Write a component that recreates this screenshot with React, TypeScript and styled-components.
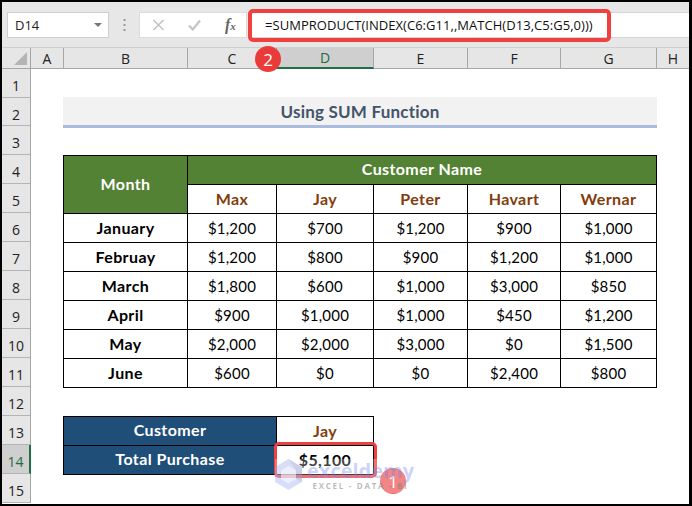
import React from "react";
import styled, { createGlobalStyle } from "styled-components";

const Global = createGlobalStyle`
  html, body { margin: 0; padding: 0; background: #000; }
  #root { width: 692px; height: 506px; overflow: hidden; }
`;

const Frame = styled.div`
  position: relative;
  box-sizing: border-box;
  width: 692px;
  height: 506px;
  padding: 2px 3px 2px 2px;
  background: #000;
  overflow: hidden;
`;
const Window = styled.div`
  height: 502px;
  background: #fff;
  display: flex;
  flex-direction: column;
  overflow: hidden;
`;
const FormulaBar = styled.div`
  height: 46px;
  box-sizing: border-box;
  padding: 10px 0 9px 5px;
  background: #e7e7e7;
  border-bottom: 1px solid #cfcfcf;
  display: flex;
  align-items: stretch;
  font-family: "Open Sans", sans-serif;
  color: #222;
`;
const NameBox = styled.div`
  width: 102px;
  box-sizing: border-box;
  background: #fff;
  border: 1px solid #cfcfcf;
  padding: 0 6px 0 7px;
  display: flex;
  align-items: center;
  justify-content: space-between;
  font-size: 13px;
`;
const Caret = styled.span`
  width: 0;
  height: 0;
  border-left: 4px solid transparent;
  border-right: 4px solid transparent;
  border-top: 4px solid #777;
`;
const Grip = styled.div`
  width: 30px;
  display: flex;
  align-items: center;
  justify-content: center;
`;
const FxBox = styled.div`
  width: 108px;
  background: #fff;
  border: 1px solid #dcdcdc;
  box-sizing: border-box;
  display: flex;
  align-items: center;
  padding-left: 12px;
  gap: 23px;
`;
const FxLabel = styled.span`
  font-family: "Liberation Serif", serif;
  font-style: italic;
  font-weight: 700;
  font-size: 16px;
  color: #666;
  margin-left: 1px;
`;
const FxSub = styled.span`
  font-size: 11px;
`;
const FormulaInput = styled.div`
  flex: 1;
  margin-left: 3px;
  background: #fff;
  border: 1px solid #d4d4d4;
  border-right: 0;
  display: flex;
  align-items: center;
  padding-left: 14px;
  font-size: 13px;
  letter-spacing: 0.04px;
  color: #111;
  white-space: nowrap;
`;
const ColumnRow = styled.div`
  display: grid;
  grid-template-columns: 29px 33px 124px 89px 97px 94px 93px 96px 33px;
  height: 21px;
  background: #e6e6e6;
`;
const Corner = styled.div`
  border-right: 1px solid #a6a6a6;
  border-bottom: 1px solid #a6a6a6;
  display: flex;
  align-items: flex-end;
  justify-content: flex-end;
  padding: 0 3px 3px 0;
`;
const ColHead = styled.div<{ $active?: boolean }>`
  box-sizing: border-box;
  display: flex;
  align-items: center;
  justify-content: center;
  font-family: "Open Sans", sans-serif;
  font-size: 14px;
  color: ${(p) => (p.$active ? "#1e6b41" : "#222")};
  background-color: ${(p) => (p.$active ? "#cfcfcf" : "#e6e6e6")};
  border-right: 1px solid #a6a6a6;
  border-bottom: ${(p) => (p.$active ? "2px solid #1e7145" : "1px solid #a6a6a6")};
`;
const Body = styled.div`
  display: flex;
  flex: 1;
`;
const RowHeads = styled.div`
  width: 29px;
  display: grid;
  grid-template-rows: 29px 28px 29px repeat(12, 29px);
`;
const RowHead = styled.div<{ $active?: boolean }>`
  box-sizing: border-box;
  display: flex;
  align-items: center;
  justify-content: center;
  font-family: "Open Sans", sans-serif;
  font-size: 14px;
  padding-top: 5px;
  color: ${(p) => (p.$active ? "#1e6b41" : "#222")};
  background: ${(p) => (p.$active ? "#cfcfcf" : "#e6e6e6")};
  border-bottom: 1px solid #b4b4b4;
  border-right: ${(p) => (p.$active ? "2px solid #1e7145" : "1px solid #a6a6a6")};
`;
const Sheet = styled.div`
  display: grid;
  grid-template-columns: 32px 124px 89px 97px 94px 93px 96px 33px;
  grid-template-rows: 29px 28px 29px repeat(12, 29px);
  font-family: Lato, sans-serif;
  font-size: 15px;
`;
const Title = styled.div`
  grid-column: 2 / 8;
  grid-row: 2;
  box-sizing: border-box;
  margin: -1px -1px 0 0;
  height: 31px;
  background: #f2f2f2;
  border-bottom: 3px solid #a9bcde;
  display: flex;
  align-items: center;
  justify-content: center;
  font-weight: 700;
  font-size: 17px;
  letter-spacing: 0.2px;
  color: #44546a;
`;
type Tone = "green" | "navy" | "head" | "label" | "value" | "result";
const Cell = styled.div<{ $c: number; $r: number; $cs?: number; $rs?: number; $tone: Tone }>`
  grid-column: ${(p) => p.$c} / span ${(p) => p.$cs ?? 1};
  grid-row: ${(p) => p.$r} / span ${(p) => p.$rs ?? 1};
  box-sizing: border-box;
  margin: 0 -1px -1px 0;
  border: 1px solid #000;
  display: flex;
  align-items: center;
  justify-content: center;
  padding-bottom: ${(p) =>
    p.$tone === "green" || p.$tone === "navy" ? 3 : p.$tone === "value" ? 0 : 2}px;
  background: ${(p) => (p.$tone === "green" ? "#548235" : p.$tone === "navy" ? "#1f4e78" : "#fff")};
  color: ${(p) =>
    p.$tone === "green" || p.$tone === "navy" ? "#fff" : p.$tone === "head" ? "#833c0b" : "#000"};
  font-weight: ${(p) => (p.$tone === "value" ? 400 : 700)};
  font-size: ${(p) => (p.$tone === "value" ? 15 : 16)}px;
  letter-spacing: ${(p) => (p.$tone === "value" ? 0.2 : 0.4)}px;
`;
const Marker = styled.div<{ $x: number; $y: number; $w: number; $h: number; $bw: number }>`
  position: absolute;
  left: ${(p) => p.$x}px;
  top: ${(p) => p.$y}px;
  width: ${(p) => p.$w}px;
  height: ${(p) => p.$h}px;
  box-sizing: border-box;
  border: ${(p) => p.$bw}px solid #f04040;
  border-radius: 5px;
`;
const Badge = styled.div<{ $x: number; $y: number; $faded?: boolean }>`
  position: absolute;
  left: ${(p) => p.$x}px;
  top: ${(p) => p.$y}px;
  width: 26px;
  height: 26px;
  border-radius: 50%;
  background: ${(p) => (p.$faded ? "rgba(234,59,59,0.82)" : "#ea3b3b")};
  color: #fff;
  display: flex;
  align-items: center;
  justify-content: center;
  font-family: "Open Sans", sans-serif;
  font-size: 17px;
`;
const Watermark = styled.div`
  position: absolute;
  left: 275px;
  top: 459px;
  width: 146px;
  height: 34px;
  background: rgba(255, 255, 255, 0.25);
  display: flex;
  gap: 5px;
  font-family: "Open Sans", sans-serif;
`;
const MarkText = styled.div`
  display: flex;
  flex-direction: column;
  align-items: center;
  margin-top: 1px;
`;
const MarkName = styled.span`
  font-size: 20px;
  font-weight: 700;
  line-height: 21px;
  color: rgba(110, 130, 235, 0.36);
`;
const MarkTag = styled.span`
  font-size: 8px;
  font-weight: 700;
  line-height: 10px;
  letter-spacing: 1.7px;
  white-space: nowrap;
  color: rgba(120, 120, 120, 0.5);
`;

const cols = ["A", "B", "C", "D", "E", "F", "G", "H"];
const names = ["Max", "Jay", "Peter", "Havart", "Wernar"];
const rows: [string, string[]][] = [
  ["January", ["$1,200", "$700", "$1,200", "$900", "$1,000"]],
  ["Februay", ["$1,200", "$800", "$900", "$1,200", "$1,000"]],
  ["March", ["$1,800", "$600", "$1,000", "$3,000", "$850"]],
  ["April", ["$900", "$1,000", "$1,000", "$450", "$1,200"]],
  ["May", ["$2,000", "$2,000", "$3,000", "$0", "$1,500"]],
  ["June", ["$600", "$0", "$0", "$2,400", "$800"]],
];

export default function App() {
  return (
    <Frame>
      <Global />
      <Window>
        <FormulaBar>
          <NameBox>
            D14
            <Caret />
          </NameBox>
          <Grip>
            <svg width="3" height="12" viewBox="0 0 3 12">
              <g fill="#9a9a9a">
                <rect x="0.5" y="0" width="2" height="2" />
                <rect x="0.5" y="5" width="2" height="2" />
                <rect x="0.5" y="10" width="2" height="2" />
              </g>
            </svg>
          </Grip>
          <FxBox>
            <svg width="13" height="12" viewBox="0 0 13 12">
              <path d="M1.5 1 L11.5 11 M11.5 1 L1.5 11" stroke="#c4c4c4" strokeWidth="1.6" fill="none" />
            </svg>
            <svg width="13" height="12" viewBox="0 0 13 12">
              <path d="M1 6.5 L4.8 10.5 L12 1.5" stroke="#c4c4c4" strokeWidth="2.2" fill="none" />
            </svg>
            <FxLabel>
              f<FxSub>x</FxSub>
            </FxLabel>
          </FxBox>
          <FormulaInput>=SUMPRODUCT(INDEX(C6:G11,,MATCH(D13,C5:G5,0)))</FormulaInput>
        </FormulaBar>
        <ColumnRow>
          <Corner>
            <svg width="13" height="13" viewBox="0 0 13 13">
              <path d="M13 0 V13 H0 Z" fill="#b4b4b4" />
            </svg>
          </Corner>
          {cols.map((c) => (
            <ColHead key={c} $active={c === "D"}>
              {c}
            </ColHead>
          ))}
        </ColumnRow>
        <Body>
          <RowHeads>
            {Array.from({ length: 15 }, (_, i) => (
              <RowHead key={i} $active={i === 13}>
                {i + 1}
              </RowHead>
            ))}
          </RowHeads>
          <Sheet>
            <Title>Using SUM Function</Title>
            <Cell $c={2} $r={4} $rs={2} $tone="green">Month</Cell>
            <Cell $c={3} $r={4} $cs={5} $tone="green">Customer Name</Cell>
            {names.map((n, i) => (
              <Cell key={n} $c={3 + i} $r={5} $tone="head">{n}</Cell>
            ))}
            {rows.map(([m, vals], r) => (
              <React.Fragment key={m}>
                <Cell $c={2} $r={6 + r} $tone="label">{m}</Cell>
                {vals.map((v, i) => (
                  <Cell key={i} $c={3 + i} $r={6 + r} $tone="value">{v}</Cell>
                ))}
              </React.Fragment>
            ))}
            <Cell $c={2} $r={13} $cs={2} $tone="navy">Customer</Cell>
            <Cell $c={4} $r={13} $tone="head">Jay</Cell>
            <Cell $c={2} $r={14} $cs={2} $tone="navy">Total Purchase</Cell>
            <Cell $c={4} $r={14} $tone="result">$5,100</Cell>
          </Sheet>
        </Body>
      </Window>
      <Marker $x={248} $y={9} $w={363} $h={33} $bw={4} />
      <Marker $x={274} $y={442} $w={103} $h={36} $bw={3} />
      <Badge $x={255} $y={46}>2</Badge>
      <Badge $x={380} $y={468} $faded>1</Badge>
      <Watermark>
        <svg width="27" height="31" viewBox="0 0 27 31">
          <path d="M13.5 0 L27 8 V23 L13.5 31 L0 23 V8 Z" fill="#8fa0ee" fillOpacity="0.35" />
          <path d="M13.5 7 L21 11.5 V20 L13.5 24.5 L6 20 V11.5 Z" fill="#fff" fillOpacity="0.55" />
          <path d="M13.5 0 L27 8 V23 L21 20 V11.5 Z" fill="#999" fillOpacity="0.2" />
        </svg>
        <MarkText>
          <MarkName>exceldemy</MarkName>
          <MarkTag>EXCEL - DATA - BI</MarkTag>
        </MarkText>
      </Watermark>
    </Frame>
  );
}
